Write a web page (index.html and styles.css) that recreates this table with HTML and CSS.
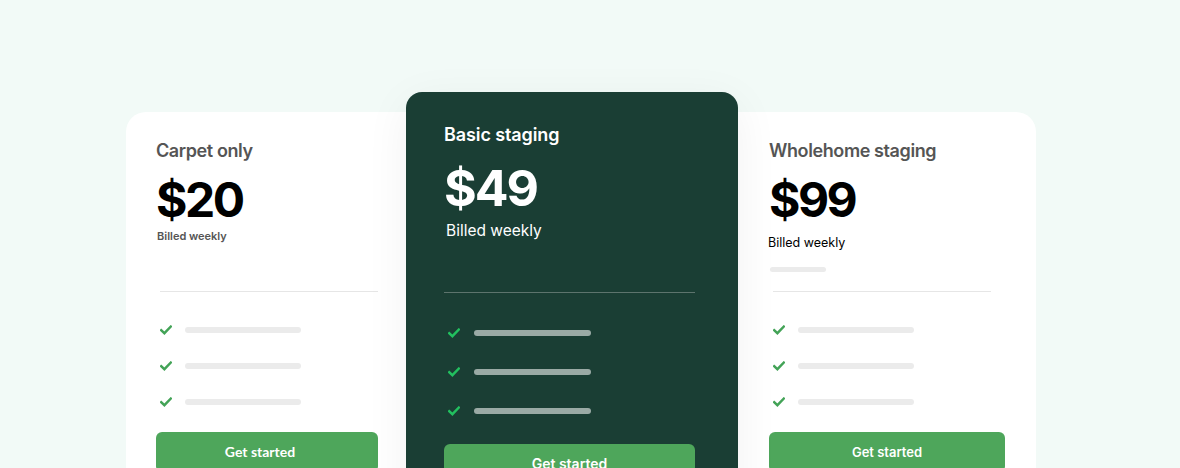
FILE: index.html
```html
<!DOCTYPE html>
<html lang="en">
<head>
<meta charset="utf-8">
<title>Pricing</title>
<link rel="stylesheet" href="styles.css">
</head>
<body>
<main class="page">
  <section class="board">
    <article class="plan plan-left">
      <h2 class="plan-title">Carpet only</h2>
      <div class="price">$20</div>
      <p class="billed billed-small">Billed weekly</p>
      <hr class="divider">
      <ul class="features">
        <li class="feature"><svg class="check" viewBox="0 0 12 10" width="12" height="10"><path d="M1.2 5.2 L4.4 8.2 L10.8 1.6" /></svg><span class="bar"></span></li>
        <li class="feature"><svg class="check" viewBox="0 0 12 10" width="12" height="10"><path d="M1.2 5.2 L4.4 8.2 L10.8 1.6" /></svg><span class="bar"></span></li>
        <li class="feature"><svg class="check" viewBox="0 0 12 10" width="12" height="10"><path d="M1.2 5.2 L4.4 8.2 L10.8 1.6" /></svg><span class="bar"></span></li>
      </ul>
      <button class="cta cta-lato">Get started</button>
    </article>

    <article class="plan plan-featured">
      <h2 class="plan-title">Basic staging</h2>
      <div class="price">$49</div>
      <p class="billed billed-large">Billed weekly</p>
      <hr class="divider">
      <ul class="features">
        <li class="feature"><svg class="check" viewBox="0 0 12 10" width="12" height="10"><path d="M1.2 5.2 L4.4 8.2 L10.8 1.6" /></svg><span class="bar"></span></li>
        <li class="feature"><svg class="check" viewBox="0 0 12 10" width="12" height="10"><path d="M1.2 5.2 L4.4 8.2 L10.8 1.6" /></svg><span class="bar"></span></li>
        <li class="feature"><svg class="check" viewBox="0 0 12 10" width="12" height="10"><path d="M1.2 5.2 L4.4 8.2 L10.8 1.6" /></svg><span class="bar"></span></li>
      </ul>
      <button class="cta">Get started</button>
    </article>

    <article class="plan plan-right">
      <h2 class="plan-title">Wholehome staging</h2>
      <div class="price">$99</div>
      <p class="billed billed-plain">Billed weekly</p>
      <span class="mini-bar"></span>
      <hr class="divider">
      <ul class="features">
        <li class="feature"><svg class="check" viewBox="0 0 12 10" width="12" height="10"><path d="M1.2 5.2 L4.4 8.2 L10.8 1.6" /></svg><span class="bar"></span></li>
        <li class="feature"><svg class="check" viewBox="0 0 12 10" width="12" height="10"><path d="M1.2 5.2 L4.4 8.2 L10.8 1.6" /></svg><span class="bar"></span></li>
        <li class="feature"><svg class="check" viewBox="0 0 12 10" width="12" height="10"><path d="M1.2 5.2 L4.4 8.2 L10.8 1.6" /></svg><span class="bar"></span></li>
      </ul>
      <button class="cta">Get started</button>
    </article>
  </section>
</main>
</body>
</html>
```

FILE: styles.css
```css
* { box-sizing: border-box; }

html, body {
  margin: 0;
  padding: 0;
  height: 100%;
  overflow: hidden;
}

body {
  background: #f2faf7;
  font-family: Inter, "Noto Sans", "Liberation Sans", sans-serif;
}

.page {
  padding-top: 112px;
  padding-left: 126px;
}

.board {
  width: 910px;
  height: 420px;
  background: #ffffff;
  border-radius: 20px;
  display: grid;
  grid-template-columns: 280px 332px 298px;
  align-items: start;
}

.plan {
  display: flex;
  flex-direction: column;
  align-items: flex-start;
}

.plan-left {
  padding: 28px 28px 0 30px;
}

.plan-right {
  padding: 28px 31px 0 31px;
}

.plan-featured {
  margin-top: -20px;
  height: 440px;
  padding: 32px 43px 0 38px;
  background: #1a3e34;
  border-radius: 16px;
  box-shadow: 0 10px 46px rgba(0, 0, 0, 0.06);
  position: relative;
  z-index: 1;
}

.plan-title {
  margin: 0;
  font-size: 18px;
  line-height: 22px;
  font-weight: 600;
  color: #555555;
  letter-spacing: -0.4px;
}

.plan-featured .plan-title {
  color: #ffffff;
  letter-spacing: -0.1px;
}

.price {
  margin-top: 10px;
  font-size: 48px;
  line-height: 56px;
  font-weight: 700;
  color: #000000;
  letter-spacing: -2.5px;
}

.plan-featured .price {
  margin-top: 13px;
  font-size: 50px;
  line-height: 58px;
  color: #ffffff;
  letter-spacing: -2px;
}

.billed { margin: 0; }

.billed-small {
  margin-left: 1px;
  font-size: 11px;
  line-height: 16px;
  font-weight: 600;
  color: #555555;
}

.billed-large {
  margin-top: 4px;
  margin-left: 2px;
  font-size: 15.5px;
  line-height: 20px;
  font-weight: 400;
  color: #ffffff;
}

.billed-plain {
  margin-top: 7px;
  margin-left: -1px;
  font-size: 12.5px;
  line-height: 16px;
  font-weight: 400;
  color: #000000;
}

.mini-bar {
  display: block;
  margin: 16px 0 0 1px;
  width: 56px;
  height: 5px;
  border-radius: 3px;
  background: #ebebeb;
}

.divider {
  align-self: stretch;
  margin: 47px 0 0 4px;
  border: 0;
  height: 1px;
  background: #e6e6e6;
}

.plan-right .divider {
  margin: 19px 14px 0 4px;
}

.plan-featured .divider {
  margin: 51px 0 0 0;
  background: #5d746d;
}

.features {
  list-style: none;
  margin: 32px 0 0 0;
  padding: 0;
  display: flex;
  flex-direction: column;
  gap: 24px;
}

.plan-featured .features {
  margin-top: 34px;
  gap: 27px;
}

.feature {
  display: flex;
  align-items: center;
  height: 12px;
  padding-left: 4px;
}

.check {
  flex: none;
  fill: none;
  stroke: #43a357;
  stroke-width: 2.4;
  stroke-linecap: square;
}

.plan-featured .check { stroke: #22c05f; }

.bar {
  display: block;
  margin-left: 13px;
  width: 116px;
  height: 6px;
  border-radius: 3px;
  background: #ebebeb;
}

.plan-featured .bar {
  margin-left: 14px;
  width: 117px;
  background: #9aaaa5;
}

.cta {
  align-self: stretch;
  margin-top: 24px;
  height: 40px;
  border: 0;
  border-radius: 6px;
  background: #4ea65b;
  color: #ffffff;
  font-family: Inter, "Noto Sans", "Liberation Sans", sans-serif;
  font-size: 13px;
  font-weight: 600;
  line-height: 18px;
  padding: 0;
}

.cta-lato {
  padding-right: 14px;
  font-family: Lato, "Liberation Sans", sans-serif;
  font-size: 14px;
  font-weight: 700;
}

.plan-featured .cta {
  margin-top: 27px;
  font-size: 14px;
}
```
